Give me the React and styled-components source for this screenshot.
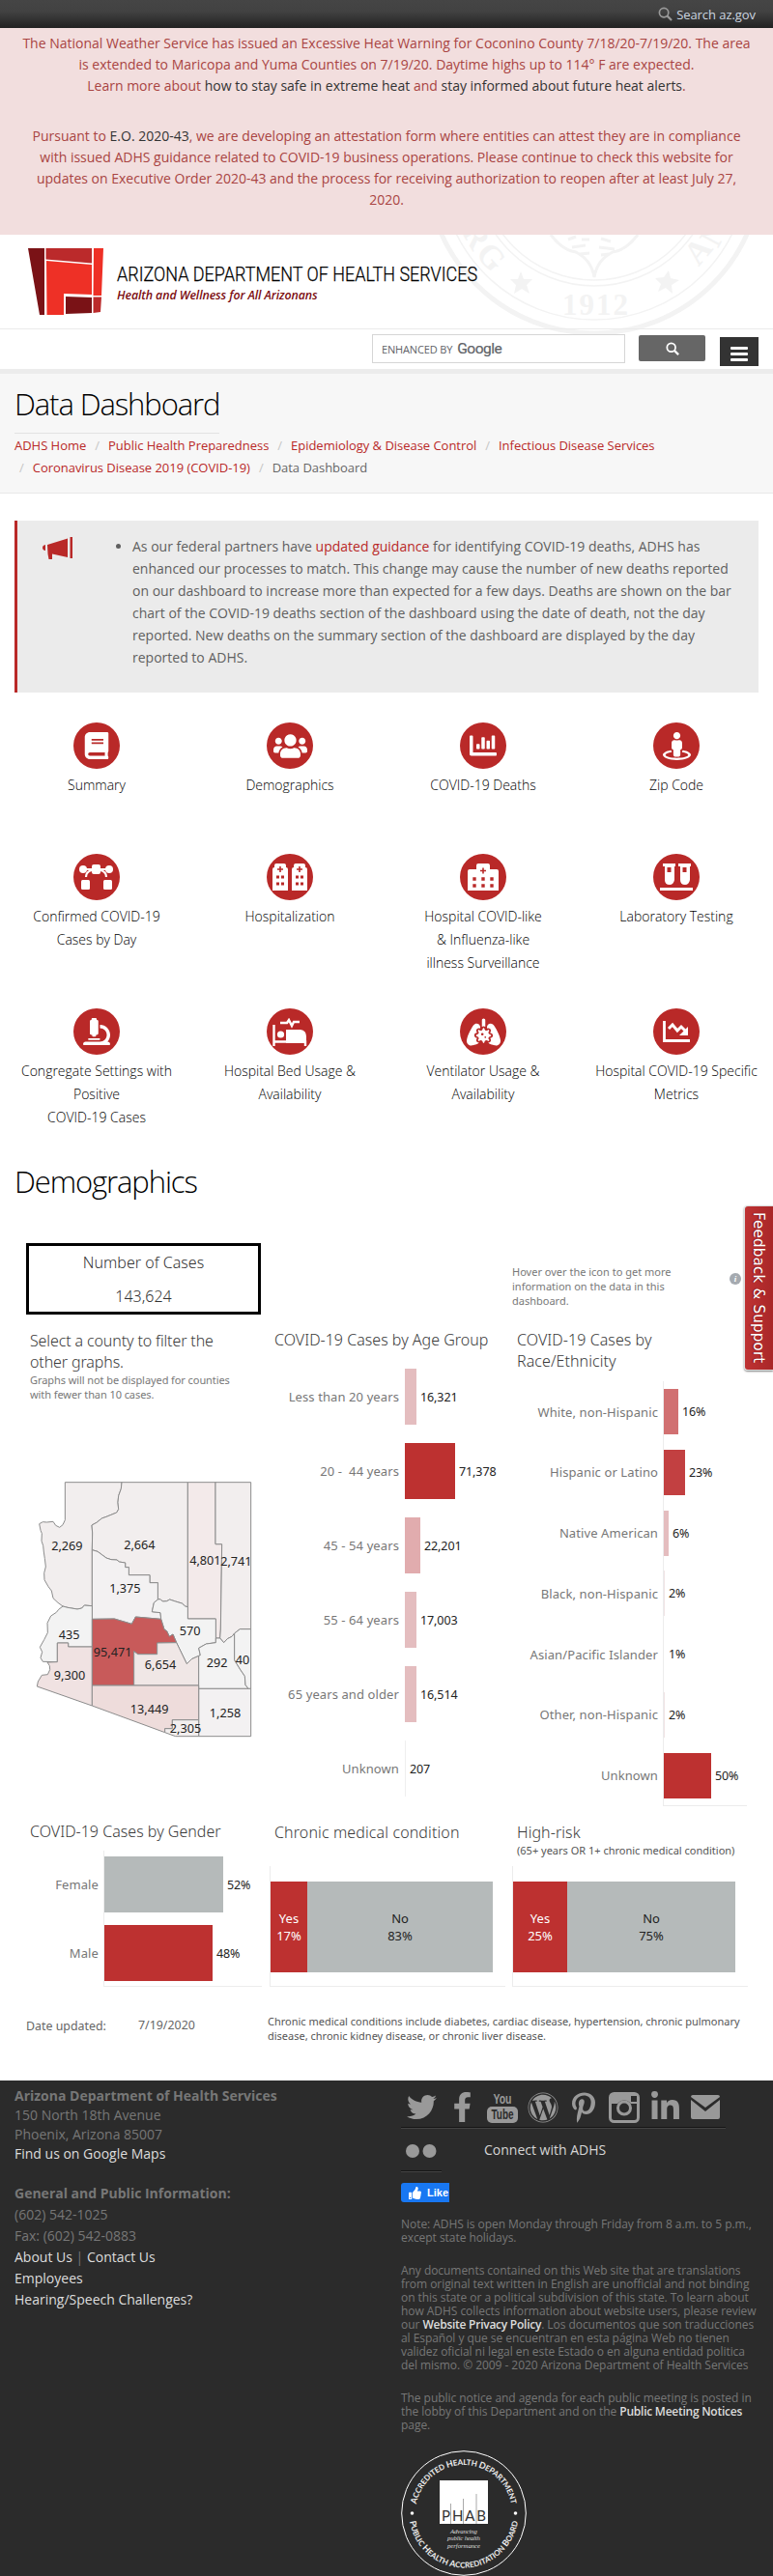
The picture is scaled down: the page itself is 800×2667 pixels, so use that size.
import React from "react";
import styled, { createGlobalStyle } from "styled-components";
import {
  FaBook, FaUsers, FaChartBar, FaStreetView, FaMicroscope, FaTwitter, FaFacebookF,
  FaWordpress, FaPinterestP, FaLinkedinIn, FaThumbsUp,
} from "react-icons/fa";
import { FaLungsVirus } from "react-icons/fa6";

const Global = createGlobalStyle`
  * { box-sizing: border-box; }
  body { margin: 0; background: #fff; font-family: "Open Sans", "Liberation Sans", sans-serif; font-size: 14px; color: #666; }
  h1, h2, h3, p, ul { margin: 0; padding: 0; font-weight: inherit; }
`;

const Page = styled.div`width: 800px; height: 2667px; overflow: hidden; position: relative;`;
const A = styled.a`color: ${(p) => p.$c || "#b92928"};`;

const TopBar = styled.div`
  height: 29px; background: linear-gradient(#454545 0%, #424242 40%, #222 100%);
  display: flex; justify-content: flex-end; align-items: center; gap: 4px; padding-right: 18px;
  color: #ccd6e0; font-size: 13px; letter-spacing: -0.06px;
`;

const Alert = styled.section`
  height: 214px; background: #f2dede; color: #a94442; text-align: center;
  padding: 5px 20px 0; line-height: 22px; white-space: nowrap;
  p + p { margin-top: 30px; }
`;

const Header = styled.header`position: relative; height: 144px; overflow: hidden; border-bottom: 5px solid #ececec;`;
const Seal = styled.svg`position: absolute; left: 430px; top: 0;`;
const Brand = styled.div`position: relative; height: 98px; border-bottom: 1px solid #ebebeb; padding: 14px 29px; display: flex; gap: 14px;`;
const BrandText = styled.div`display: flex; flex-direction: column; padding-top: 15px;`;
const BrandName = styled.div`
  font: 300 21px/25px "Roboto", sans-serif; color: #000; white-space: nowrap; -webkit-text-stroke: 0.25px #000;
  transform: scaleX(0.857); transform-origin: 0 50%;
`;
const Tagline = styled.div`font: italic 600 12.4px/18px "Open Sans", sans-serif; color: #7c0d11; white-space: nowrap; letter-spacing: -0.1px;`;
const SearchRow = styled.div`position: relative; display: flex; justify-content: flex-end; padding: 5px 15px 0;`;
const SearchBox = styled.div`
  width: 262px; height: 30px; border: 1px solid #d6d6d6; background: #fff; padding-left: 9px;
  display: flex; align-items: center; gap: 5px; color: #5f6368; font-size: 11px; letter-spacing: -0.15px;
  b { font: 400 15.5px Roboto, sans-serif; letter-spacing: -0.5px; -webkit-text-stroke: 0.2px #5f6368; }
`;
const SearchButton = styled.div`
  width: 69px; height: 27px; margin: 1px 15px 0 14px; border-radius: 2px; background: #666;
  display: flex; align-items: center; justify-content: center;
`;
const MenuButton = styled.div`
  width: 40px; height: 30px; margin-top: 3px; background: #333; padding: 10px 11px 0;
  display: flex; flex-direction: column; gap: 3px;
  i { height: 3px; background: #fff; border-radius: 1px; }
`;

const TitleBand = styled.section`height: 124px; background: #f7f7f7; border-bottom: 1px solid #e9e9e9; padding: 13px 15px 0;`;
const PageTitle = styled.h1`
  display: table; color: #000; font-size: 31px; font-weight: 300; line-height: 36px; white-space: nowrap;
  padding-bottom: 12px; border-bottom: 1px solid #e2e2e2; letter-spacing: -1.1px; margin-bottom: 1px;
`;
const Crumbs = styled.nav`font-size: 13px; line-height: 23.3px; white-space: nowrap; letter-spacing: -0.03px;`;
const Slash = styled.span`color: #c6c6c6; margin: 0 9px 0 ${(p) => (p.$first ? 5 : 9)}px;`;

const Notice = styled.section`
  margin: 28px 15px 0; height: 178px; background: #ebebeb; border-left: 3px solid #b92928;
  padding: 15px 20px 0 26px; display: flex; line-height: 23px; color: #5f5f5f;
`;
const NoticeIcon = styled.svg`flex: none; margin-top: 2px;`;
const NoticeList = styled.ul`margin-left: 59px; white-space: nowrap; list-style: disc;`;

const Tiles = styled.section`display: grid; grid-template-columns: repeat(4, 200px); grid-template-rows: 136px 160px 146px; margin: 31px 0 13px;`;
const Tile = styled.div`display: flex; flex-direction: column; align-items: center; text-align: center; white-space: pre-line; color: #000; font-weight: 300; line-height: 24px;`;
const Disc = styled.div`
  width: 48px; height: 48px; flex: none; margin-bottom: 5px; border-radius: 50%; background: #b92928; color: #fff;
  display: flex; align-items: center; justify-content: center;
`;
const SectionTitle = styled.h2`color: #000; font-size: 31px; font-weight: 300; line-height: 40px; padding-left: 15px; letter-spacing: -1.1px;`;

const Board = styled.section`font-family: "Noto Sans", "Open Sans", sans-serif; font-weight: 400; color: #6f6f6f; margin-bottom: 13px;`;
const BoardHead = styled.div`display: flex; height: 74px; padding-left: 27px; margin-top: 44px;`;
const CaseBox = styled.div`
  width: 243px; height: 74px; border: 3px solid #000; text-align: center; color: #333; font-weight: 300;
  font-size: 16px; line-height: 35px;
`;
const Hint = styled.div`width: 200px; margin: 22px 0 0 260px; font-size: 11px; line-height: 15px; white-space: pre; color: #787878;`;
const InfoDot = styled.div`
  width: 12px; height: 12px; border-radius: 50%; margin: 31px 0 0 25px; background: #a5aab0; color: #fff;
  font: italic bold 9px/12px "Liberation Serif", serif; text-align: center;
`;
const Row = styled.div`display: flex; height: ${(p) => p.$h}px; padding-left: 27px;`;
const Panel = styled.div`width: ${(p) => p.$w}px; flex: none;`;
const ChartTitle = styled.h3`
  color: #3a3a3a; font-weight: 300; font-size: 16px; line-height: 22px; letter-spacing: ${(p) => p.$ls || "0.07px"};
  white-space: pre; padding: ${(p) => p.$pt || 0}px 0 0 ${(p) => (p.$pl === undefined ? 4 : p.$pl)}px;
  margin-bottom: ${(p) => p.$mb || 0}px;
`;
const SmallText = styled.p`
  font-size: 11px; line-height: 15px; white-space: pre; padding-left: 4px;
  letter-spacing: ${(p) => p.$ls || "0px"}; color: ${(p) => p.$c || "#787878"};
`;
const RiskNote = styled.div`height: 24px; padding-left: 3px;`;
const CountyMap = styled.svg`display: block; margin: 81px 0 0 9px;`;

const Plot = styled.div`
  display: flex; flex-direction: column; gap: ${(p) => p.$gap}px; padding-top: ${(p) => p.$pt}px; height: ${(p) => p.$h}px;
  background: linear-gradient(#ececec, #ececec) ${(p) => p.$axis}px 0 / ${(p) => (p.$line ? 1 : 0)}px 100% no-repeat,
    linear-gradient(#ececec, #ececec) ${(p) => p.$axis}px 100% / ${(p) => p.$line || 0}px ${(p) => (p.$line ? 1 : 0)}px no-repeat;
`;
const BarRow = styled.div`display: flex; align-items: center; flex: none; height: ${(p) => p.$h}px;`;
const BarLabel = styled.span`width: ${(p) => p.$w}px; padding-right: 6px; text-align: right; font-size: 13px; color: #777; white-space: pre; letter-spacing: 0.1px;`;
const Bar = styled.span`height: 100%; background: ${(p) => p.$c};`;
const BarValue = styled.span`padding-left: 4px; font-size: 12.5px; color: #222; letter-spacing: -0.1px;`;

const Stack = styled.div`
  height: 125px; margin-left: 2px; padding-top: 16px; display: flex; align-items: flex-start; width: 244px;
  border-left: 1px solid #ececec; border-bottom: 1px solid #ececec;
`;
const StackPart = styled.div`
  height: 94px; display: flex; flex-direction: column; align-items: center; justify-content: center;
  font-size: 13px; line-height: 18px; background: ${(p) => p.$c}; color: ${(p) => p.$t}; width: ${(p) => p.$w}px;
`;
const Dates = styled.div`display: flex; padding: 18px 0 0 27px; height: 74px; font-size: 12.4px; color: #666;`;
const DateCell = styled.div`width: ${(p) => p.$w}px; padding-top: ${(p) => p.$pt}px;`;

const Feedback = styled.div`
  position: absolute; right: 0; top: 1248px; width: 30px; height: 171px; background: linear-gradient(90deg, #bf3233, #a92728);
  border: 1px solid #ddd; border-right: 0; border-radius: 4px 0 0 4px; box-shadow: 0 1px 2px rgba(0,0,0,.5);
  writing-mode: vertical-rl; text-align: center; font: 15px/31px "DejaVu Sans", sans-serif; color: #fff; letter-spacing: 0.25px;
  text-shadow: 0 1px 1px #7a1010;
`;

const Footer = styled.footer`height: 513px; background: #2b2b2b; display: flex; padding: 0 15px; color: #777;`;
const Contact = styled.div`
  width: 400px; flex: none; padding-top: 6px; line-height: 20px; white-space: pre;
  p + p { margin-top: 20px; line-height: 22px; }
`;
const Connect = styled.div`width: 370px; flex: none;`;
const Socials = styled.div`display: flex; flex-wrap: wrap; height: 95px; align-content: flex-start;`;
const Social = styled.div`
  width: 42px; height: ${(p) => p.$h || 50}px; color: #999; display: flex; align-items: center; justify-content: center;
  padding-top: ${(p) => p.$pt || 2}px; border-bottom: 1px solid #444; box-shadow: inset 0 -1px #161616;
`;
const ConnectLabel = styled.div`padding: 11px 0 0 44px; color: #d5d5d5; line-height: 22px;`;
const Like = styled.div`
  width: 50px; height: 20px; margin: 11px 0 16px; border-radius: 3px 0 0 3px; background: #1877f2; color: #fff;
  font: bold 11px/20px "Liberation Sans", sans-serif; display: flex; align-items: center; gap: 6px; padding-left: 8px;
`;
const Legal = styled.p`
  font-size: 12px; line-height: 14px; white-space: pre; margin-bottom: 20px; letter-spacing: -0.05px;
  a { color: #ddd; font-weight: 600; letter-spacing: -0.25px; }
`;
const Phab = styled.svg`display: block; margin-top: -1px;`;

const grey = "#b5baba";
const red = "#bd3130";

const Building = ({ x = 0, w = 15 }) => (
  <g transform={`translate(${x} 0)`}>
    <path fill="currentColor" d={`M0 6q0-2 2-2V2q0-2 2-2H${w - 4}q2 0 2 2V4q2 0 2 2V28H0Z`} />
    <path stroke="#b92928" strokeWidth="1.6" d={`M${w / 2 - 3} 6h6M${w / 2} 3v6`} />
    <path stroke="#b92928" strokeWidth="3" d={`M${w / 2 - 4} 14h3M${w / 2 + 1} 14h3M${w / 2 - 4} 21h3M${w / 2 + 1} 21h3`} />
  </g>
);
const Svg = ({ w, h, children }) => (
  <svg width={w} height={h} viewBox={`0 0 ${w} ${h}`} fill="none">{children}</svg>
);

const icons = {
  flow: (
    <Svg w={36} h={28}>
      <g fill="currentColor">
        <circle cx="4" cy="6" r="4" /><rect x="13" y="1" width="9" height="10" rx="2" />
        <circle cx="31" cy="6" r="4" /><rect x="2" y="17" width="9" height="10" rx="1.5" /><rect x="25" y="17" width="9" height="10" rx="1.5" />
      </g>
      <path d="M6 6h22M13 7C9 8 7 11 7 14M22 7c4 1 6 4 6 7" stroke="currentColor" strokeWidth="2.2" />
    </Svg>
  ),
  towers: <Svg w={36} h={29}><Building x={0} w={16} /><Building x={20} w={16} /></Svg>,
  hospital: (
    <Svg w={32} h={29}>
      <path fill="currentColor" d="M0 8q0-2 2-2H9V2q0-2 2-2H21q2 0 2 2V6H30q2 0 2 2V28H0Z" />
      <path stroke="#b92928" strokeWidth="1.6" d="M13 7.500h6M16 4.500v6" />
      <path stroke="#b92928" strokeWidth="3.400" strokeDasharray="3.400 5.600" d="M5.300 16h23M5.300 23h23" />
    </Svg>
  ),
  tubes: (
    <Svg w={34} h={29}>
      <path fill="currentColor" fillRule="evenodd" d="M3 0h13v3h-1v14q-1 5-5 5q-5 0-5-5V3H3ZM19 0h13v3h-1v14q-1 5-5 5q-5 0-5-5V3H19ZM7.500 4v5H11.500V4ZM23.500 4v5H27.500V4ZM0 25h34v3H0Z" />
    </Svg>
  ),
  bed: (
    <Svg w={36} h={29}>
      <path d="M1.500 7V29M1.500 24.500H34V29M8 5h7l2-3 3 6 2-4h6" stroke="currentColor" strokeWidth="2.400" />
      <circle cx="8.500" cy="17" r="3.600" fill="currentColor" />
      <path d="M14 12H29q6 1 6 7v7H14Z" fill="currentColor" />
    </Svg>
  ),
  down: (
    <Svg w={28} h={22}>
      <path d="M1.500 0V20.500H28" stroke="currentColor" strokeWidth="2.800" />
      <path d="M6 8l4-4 5 6 4-4 5 5" stroke="currentColor" strokeWidth="3" />
      <path d="M26 6v9h-9Z" fill="currentColor" />
    </Svg>
  ),
};

const tiles = [
  [<FaBook size={28} />, "Summary"],
  [<FaUsers size={35} />, "Demographics"],
  [<FaChartBar size={28} />, "COVID-19 Deaths"],
  [<FaStreetView size={29} />, "Zip Code"],
  [icons.flow, "Confirmed COVID-19\nCases by Day"],
  [icons.towers, "Hospitalization"],
  [icons.hospital, "Hospital COVID-like\n& Influenza-like\nillness Surveillance"],
  [icons.tubes, "Laboratory Testing"],
  [<FaMicroscope size={28} />, "Congregate Settings with\nPositive\nCOVID-19 Cases"],
  [icons.bed, "Hospital Bed Usage &\nAvailability"],
  [<FaLungsVirus size={35} />, "Ventilator Usage &\nAvailability"],
  [icons.down, "Hospital COVID-19 Specific\nMetrics"],
];

const ages = [
  ["Less than 20 years", 12, "#e4bdbf", "16,321"],
  ["20 -  44 years", 52, red, "71,378"],
  ["45 - 54 years", 16, "#e1acae", "22,201"],
  ["55 - 64 years", 12, "#e4bdbf", "17,003"],
  ["65 years and older", 12, "#e4bdbf", "16,514"],
  ["Unknown", 1, "#efefef", "207"],
];
const races = [
  ["White, non-Hispanic", 15, "#d17071", "16%"],
  ["Hispanic or Latino", 22, "#c24041", "23%"],
  ["Native American", 5, "#e4bdbf", "6%"],
  ["Black, non-Hispanic", 1, "#f0e4e5", "2%"],
  ["Asian/Pacific Islander", 1, "transparent", "1%"],
  ["Other, non-Hispanic", 1, "#f0e4e5", "2%"],
  ["Unknown", 49, red, "50%"],
];
const genders = [["Female", 123, grey, "52%"], ["Male", 112, red, "48%"]];

const counties = [
  ["#f2eeee", "202,163 378,163 376,183 368,205 366,225 368,247 362,257 330,270 316,275 300,288 285,296 287,320 286,373 286,547 262,545 254,554 240,557 228,555 210,552 195,548 180,537 165,523 160,500 150,487 138,466 137,445 142,425 139,400 136,380 134,360 129,345 130,322 126,312 122,292 133,286 145,287 165,285 173,297 185,303 195,295 202,280", "2,269", 208, 361],
  ["#f2eeee", "378,163 583,163 583,550 575,548 565,539 545,533 527,527 518,532 505,533 498,526 490,527 490,475 465,475 465,451 400,451 400,427 389,427 389,413 370,410 363,404 345,403 330,398 303,378 286,373 287,320 285,296 300,288 316,275 330,270 362,257 368,247 366,225 368,205 376,183", "2,664", 433, 356],
  ["#f3f1f2", "286,373 303,378 330,398 345,403 363,404 370,410 389,413 389,427 400,427 400,451 465,451 465,475 490,475 490,527 478,537 472,565 498,568 500,588 421,581 409,603 355,587 286,588", "1,375", 388, 491],
  ["#f3eaea", "583,163 669,163 669,355 689,355 685,620 683,647 670,647 670,587 583,587", "4,801", 637, 404],
  ["#f2eeee", "669,163 779,163 779,619 745,619 728,632 720,642 706,649 695,661 683,647 685,620 689,355 669,355", "2,741", 733, 407],
  ["#f3f3f3", "490,527 498,526 505,533 518,532 527,527 545,533 565,539 575,548 583,550 583,587 670,587 670,661 640,665 617,678 622,700 595,712 580,727 548,661 537,635 526,642 518,625 510,620 500,588 498,568 472,565 478,537", "570", 590, 623],
  ["#f3f3f3", "195,548 210,552 228,555 240,557 254,554 262,545 286,547 286,674 212,674 212,662 178,662 178,721 133,720 126,708 131,690 124,675 137,652 148,630 147,600 158,578 175,567 182,558", "435", 215, 635],
  ["#f0e2e2", "178,662 212,662 212,674 286,674 286,857 115,797 118,782 130,762 148,760 155,745 154,733 147,722 178,721", "9,300", 216, 761],
  ["#c85a5a", "286,588 355,587 409,603 421,581 500,588 510,620 518,625 526,642 537,635 548,661 488,662 488,697 428,697 416,688 416,794 286,794", "95,471", 350, 689],
  ["#f0e7e6", "416,688 428,697 488,697 488,662 548,661 580,727 595,712 617,702 617,794 416,794", "6,654", 498, 728],
  ["#f3f3f3", "617,702 622,700 617,678 640,665 670,661 670,647 683,647 695,661 706,649 720,642 728,632 728,715 745,743 760,765 762,792 771,804 617,804", "292", 674, 722],
  ["#f3f3f3", "728,632 745,619 779,619 779,804 771,804 762,792 760,765 745,743 728,715", "40", 753, 713],
  ["#f3f1f2", "617,804 779,804 779,952 617,952", "1,258", 699, 878],
  ["#eedcdb", "286,794 617,794 617,901 535,901 535,928 512,928 512,940 286,857", "13,449", 464, 868],
  ["#f2eeee", "535,901 617,901 617,952 545,952 512,940 512,928 535,928", "2,305", 576, 926],
];

const Chart = ({ data, labelWidth, height }) =>
  data.map(([label, w, c, value], i) => (
    <BarRow key={i} $h={height}>
      <BarLabel $w={labelWidth}>{label}</BarLabel>
      <Bar $c={c} style={{ width: w }} />
      <BarValue>{value}</BarValue>
    </BarRow>
  ));

const Magnifier = ({ size, color, sw }) => (
  <svg width={size} height={size} viewBox="0 0 16 16" fill="none" stroke={color} strokeWidth={sw}>
    <circle cx="6.500" cy="6.500" r="5" /><path d="M10 10l5 5" strokeWidth={sw * 1.3} />
  </svg>
);

export default function App() {
  return (
    <Page>
      <Global />
      <TopBar><Magnifier size={15} color="#999" sw={1.8} />Search az.gov</TopBar>
      <Alert>
        <p>
          The National Weather Service has issued an Excessive Heat Warning for Coconino County 7/18/20-7/19/20. The area<br />
          is extended to Maricopa and Yuma Counties on 7/19/20. Daytime highs up to 114° F are expected.<br />
          Learn more about <A $c="#333">how to stay safe in extreme heat</A> and <A $c="#333">stay informed about future heat alerts</A>.
        </p>
        <p>
          Pursuant to <A $c="#333">E.O. 2020-43</A>, we are developing an attestation form where entities can attest they are in compliance<br />
          with issued ADHS guidance related to COVID-19 business operations. Please continue to check this website for<br />
          updates on Executive Order 2020-43 and the process for receiving authorization to reopen after at least July 27,<br />
          2020.
        </p>
      </Alert>

      <Header>
        <Seal width="370" height="106" viewBox="430 243 370 106" fill="none" stroke="#f3f3f3">
          <circle cx="615" cy="172" r="173" strokeWidth="5" />
          <circle cx="615" cy="172" r="159" strokeWidth="1.500" />
          <circle cx="615" cy="172" r="124" strokeWidth="1.500" />
          <circle cx="615" cy="172" r="118" strokeWidth="1.500" />
          <path d="M570 243q12 16 26 18q16 8 19 26q3-18 19-26q14-2 26-18" strokeWidth="3" />
          <path d="M588 248l8-3M592 256l14-2M600 263l10-1M602 248l8 0M622 247l10 3M620 256l16 2M622 264l8-1" strokeWidth="3" />
          <g fill="#f3f3f3" stroke="none">
            <path d="M539 281l3 8 9 0-6 6 3 9-8-5-8 5 2-9-6-6 8 0ZM692 280l2 8 9 2-8 5 1 9-7-6-8 4 3-8-6-6 9-1Z" />
            <text x="616" y="326" fontFamily="Liberation Serif" fontWeight="bold" fontSize="31" textAnchor="middle" textLength="68">1912</text>
            <text fontFamily="Liberation Serif" fontWeight="bold" fontSize="34" transform="translate(506 268) rotate(48)" textAnchor="middle" dominantBaseline="middle">G</text>
            <text fontFamily="Liberation Serif" fontWeight="bold" fontSize="34" transform="translate(490 246) rotate(60)" textAnchor="middle" dominantBaseline="middle">R</text>
            <text fontFamily="Liberation Serif" fontWeight="bold" fontSize="34" transform="translate(725 262) rotate(-50)" textAnchor="middle" dominantBaseline="middle">A</text>
            <text fontFamily="Liberation Serif" fontWeight="bold" fontSize="34" transform="translate(742 243) rotate(-62)" textAnchor="middle" dominantBaseline="middle">N</text>
          </g>
        </Seal>
        <Brand>
          <svg width="78" height="69" viewBox="0 0 78 69">
            <path fill="#7a1216" d="M0 0H17V69H12ZM39 50L66 51V67L39 68Z" />
            <path fill="#bb2a2b" d="M18.500 0H66V15.500L18.500 11.500ZM67.500 50.500H76L75 66 67.500 67Z" />
            <path fill="#ee3026" d="M19 13L66 17V48L37 47V69H19.500ZM68 0H78L76 49H67.500Z" />
          </svg>
          <BrandText>
            <BrandName>ARIZONA DEPARTMENT OF HEALTH SERVICES</BrandName>
            <Tagline>Health and Wellness for All Arizonans</Tagline>
          </BrandText>
        </Brand>
        <SearchRow>
          <SearchBox>ENHANCED BY <b>Google</b></SearchBox>
          <SearchButton><Magnifier size={14} color="#fff" sw={2} /></SearchButton>
          <MenuButton><i /><i /><i /></MenuButton>
        </SearchRow>
      </Header>

      <TitleBand>
        <PageTitle>Data Dashboard</PageTitle>
        <Crumbs>
          <A>ADHS Home</A><Slash>/</Slash><A>Public Health Preparedness</A><Slash>/</Slash><A>Epidemiology &amp; Disease Control</A><Slash>/</Slash><A>Infectious Disease Services</A><br />
          <Slash $first>/</Slash><A>Coronavirus Disease 2019 (COVID-19)</A><Slash>/</Slash>Data Dashboard
        </Crumbs>
      </TitleBand>

      <Notice>
        <NoticeIcon width="34" height="26" viewBox="0 0 34 26" fill="#b92928">
          <path d="M5 8L26 1.500V21L10 17.500V23H6.500L5.500 17.500ZM28.500 0h2.500v22h-2.500ZM3 8v6Q0 13.500 0 11T3 8Z" />
        </NoticeIcon>
        <NoticeList>
          <li>
            As our federal partners have <A>updated guidance</A> for identifying COVID-19 deaths, ADHS has<br />
            enhanced our processes to match. This change may cause the number of new deaths reported<br />
            on our dashboard to increase more than expected for a few days. Deaths are shown on the bar<br />
            chart of the COVID-19 deaths section of the dashboard using the date of death, not the day<br />
            reported. New deaths on the summary section of the dashboard are displayed by the day<br />
            reported to ADHS.
          </li>
        </NoticeList>
      </Notice>

      <Tiles>
        {tiles.map(([icon, label]) => <Tile key={label}><Disc>{icon}</Disc>{label}</Tile>)}
      </Tiles>
      <SectionTitle>Demographics</SectionTitle>

      <Board>
        <BoardHead>
          <CaseBox>Number of Cases<br />143,624</CaseBox>
          <Hint>{"Hover over the icon to get more\ninformation on the data in this\ndashboard."}</Hint>
          <InfoDot>i</InfoDot>
        </BoardHead>
        <Row $h={519}>
          <Panel $w={253}>
            <ChartTitle $pt={16} $ls="-0.12px">{"Select a county to filter the\nother graphs."}</ChartTitle>
            <SmallText $ls="-0.08px">{"Graphs will not be displayed for counties\nwith fewer than 10 cases."}</SmallText>
            <CountyMap width="229" height="270" viewBox="108 155 687 810">
              {counties.map(([fill, pts]) => <polygon key={pts} points={pts} fill={fill} stroke="#8c8c8c" strokeWidth="3" strokeLinejoin="round" />)}
              {counties.map(([, , n, x, y]) => <text key={n} x={x} y={y + 14} fontSize="38" fill="#222" textAnchor="middle">{n}</text>)}
            </CountyMap>
          </Panel>
          <Panel $w={251}>
            <ChartTitle $pt={15} $ls="0.02px">COVID-19 Cases by Age Group</ChartTitle>
            <Plot $pt={19} $gap={19} $h={470} $axis={139}><Chart data={ages} labelWidth={139} height={58} /></Plot>
          </Panel>
          <Panel $w={250}>
            <ChartTitle $pt={15} $mb={10}>{"COVID-19 Cases by\nRace/Ethnicity"}</ChartTitle>
            <Plot $pt={8} $gap={15.8} $h={440} $axis={155} $line={87}><Chart data={races} labelWidth={156} height={47} /></Plot>
          </Panel>
        </Row>
        <Row $h={187}>
          <Panel $w={250}>
            <ChartTitle $pt={5} $mb={9} $ls="0.02px">COVID-19 Cases by Gender</ChartTitle>
            <Plot $pt={6} $gap={13} $h={141} $axis={80} $line={164}><Chart data={genders} labelWidth={81} height={58} /></Plot>
          </Panel>
          <Panel $w={251}>
            <ChartTitle $pt={6} $pl={7} $mb={24} $ls="0.12px">Chronic medical condition</ChartTitle>
            <Stack>
              <StackPart $w={38} $c={red} $t="#fff"><span>Yes</span><span>17%</span></StackPart>
              <StackPart $w={192} $c={grey} $t="#222"><span>No</span><span>83%</span></StackPart>
            </Stack>
          </Panel>
          <Panel $w={251}>
            <ChartTitle $pt={6} $pl={7}>High-risk</ChartTitle>
            <RiskNote><SmallText $c="#555">(65+ years OR 1+ chronic medical condition)</SmallText></RiskNote>
            <Stack>
              <StackPart $w={56} $c={red} $t="#fff"><span>Yes</span><span>25%</span></StackPart>
              <StackPart $w={174} $c={grey} $t="#222"><span>No</span><span>75%</span></StackPart>
            </Stack>
          </Panel>
        </Row>
        <Dates>
          <DateCell $w={116} $pt={4}>Date updated:</DateCell>
          <DateCell $w={130} $pt={3}>7/19/2020</DateCell>
          <SmallText $c="#555">{"Chronic medical conditions include diabetes, cardiac disease, hypertension, chronic pulmonary\ndisease, chronic kidney disease, or chronic liver disease."}</SmallText>
        </Dates>
      </Board>

      <Footer>
        <Contact>
          <p><b>Arizona Department of Health Services</b>{"\n150 North 18th Avenue\nPhoenix, Arizona 85007\n"}<A $c="#ddd">Find us on Google Maps</A></p>
          <p><b>General and Public Information:</b>{"\n(602) 542-1025\nFax: (602) 542-0883\n"}<A $c="#ddd">About Us</A> | <A $c="#ddd">Contact Us</A>{"\n"}<A $c="#ddd">Employees</A>{"\n"}<A $c="#ddd">Hearing/Speech Challenges?</A></p>
        </Contact>
        <Connect>
          <Socials>
            <Social $pt={6}><FaTwitter size={31} /></Social>
            <Social $pt={6}><FaFacebookF size={31} /></Social>
            <Social $pt={6}>
              <svg width="32" height="32" viewBox="0 0 32 32">
                <rect y="15" width="32" height="17" rx="5" fill="#999" />
                <text x="16" y="12" fontFamily="Liberation Sans" fontWeight="bold" fontSize="15" fill="#999" textAnchor="middle" textLength="19" lengthAdjust="spacingAndGlyphs">You</text>
                <text x="16" y="28" fontFamily="Liberation Sans" fontWeight="bold" fontSize="14" fill="#2b2b2b" textAnchor="middle" textLength="23" lengthAdjust="spacingAndGlyphs">Tube</text>
              </svg>
            </Social>
            <Social $pt={6}><FaWordpress size={32} /></Social>
            <Social $pt={6}><FaPinterestP size={32} /></Social>
            <Social $pt={6}>
              <svg width="32" height="32" viewBox="0 0 32 32" fill="none" stroke="#999" strokeWidth="3">
                <rect x="1.500" y="1.500" width="29" height="29" rx="4" />
                <path d="M2 2H30V12H22Q16 6 10 12H2Z" fill="#999" stroke="none" />
                <circle cx="16" cy="17" r="8.500" fill="#2b2b2b" stroke="none" /><circle cx="16" cy="16.500" r="6.500" />
                <rect x="23" y="4" width="6" height="6" fill="#2b2b2b" stroke="none" />
              </svg>
            </Social>
            <Social $pt={6}><FaLinkedinIn size={33} /></Social>
            <Social $pt={6}>
              <svg width="30" height="26" viewBox="0 0 30 26"><path fill="#999" d="M2 0H28q2 0 2 2L15 13 0 2Q0 0 2 0ZM0 5L15 17 30 5V23q0 2-2 2H2q-2 0-2-2Z" /></svg>
            </Social>
            <Social $h={45} $pt={1}><svg width="32" height="16" viewBox="0 0 32 16" fill="#999"><circle cx="7" cy="8" r="7" /><circle cx="24.500" cy="8" r="7" /></svg></Social>
            <ConnectLabel>Connect with ADHS</ConnectLabel>
          </Socials>
          <Like><FaThumbsUp size={13} />Like</Like>
          <Legal>{"Note: ADHS is open Monday through Friday from 8 a.m. to 5 p.m.,\nexcept state holidays."}</Legal>
          <Legal>{"Any documents contained on this Web site that are translations\nfrom original text written in English are unofficial and not binding\non this state or a political subdivision of this state. To learn about\nhow ADHS collects information about website users, please review\nour "}<a>Website Privacy Policy</a>{". Los documentos que son traducciones\nal Español y que se encuentran en esta página Web no tienen\nvalidez oficial ni legal en este Estado o en alguna entidad politica\ndel mismo. © 2009 - 2020 Arizona Department of Health Services"}</Legal>
          <Legal>{"The public notice and agenda for each public meeting is posted in\nthe lobby of this Department and on the "}<a>Public Meeting Notices</a>{"\npage."}</Legal>
          <Phab width="130" height="130" viewBox="0 0 130 130">
            <circle cx="65" cy="65" r="64.300" fill="none" stroke="#fff" />
            <path id="arcTop" d="M15 65A50 50 0 0 1 115 65" fill="none" />
            <path id="arcBottom" d="M8.500 65A56.500 56.500 0 0 0 121.500 65" fill="none" />
            <g fill="#eee" fontFamily="Lato" fontWeight="bold" fontSize="8" textAnchor="middle">
              <text textLength="138"><textPath href="#arcTop" startOffset="50%" textLength="138"><tspan fontSize="9">A</tspan>CCREDITED <tspan fontSize="9">H</tspan>EALTH <tspan fontSize="9">D</tspan>EPARTMENT</textPath></text>
              <text textLength="160"><textPath href="#arcBottom" startOffset="50%" textLength="160"><tspan fontSize="9">P</tspan>UBLIC <tspan fontSize="9">H</tspan>EALTH <tspan fontSize="9">A</tspan>CCREDITATION <tspan fontSize="9">B</tspan>OARD</textPath></text>
            </g>
            <circle cx="11.500" cy="65" r="1.800" fill="#fff" /><circle cx="118.500" cy="65" r="1.800" fill="#fff" />
            <rect x="40" y="31" width="50" height="45" fill="#fff" />
            <path d="M51.500 55v21M64.500 50v26M78 45v31" stroke="#aaa" />
            <text x="65" y="73" fontFamily="Lato" fontSize="15" fill="#333" textAnchor="middle" textLength="46">PHAB</text>
            <g fill="#ddd" fontFamily="Liberation Serif" fontStyle="italic" fontSize="6.800" textAnchor="middle">
              <text x="65" y="85.500" textLength="28">Advancing</text><text x="65" y="93" textLength="34">public health</text><text x="65" y="100.500" textLength="34">performance</text>
            </g>
          </Phab>
        </Connect>
      </Footer>
      <Feedback>Feedback &amp; Support</Feedback>
    </Page>
  );
}
